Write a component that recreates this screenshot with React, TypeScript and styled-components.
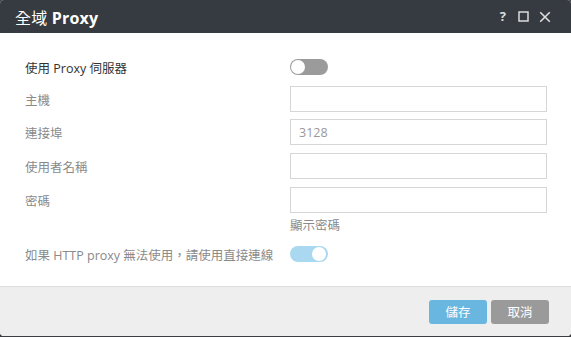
import styled, { createGlobalStyle } from 'styled-components';

const GlobalStyle = createGlobalStyle`
  html, body {
    margin: 0;
    padding: 0;
    background: #3b3d42;
  }
  body {
    font-family: "Open Sans", "Noto Sans CJK TC", sans-serif;
  }
`;

export default function App() {
  return (
    <>
      <GlobalStyle />
      <Dialog>
        <Header>
          <Title>
            <TitleCjk>全域</TitleCjk> Proxy
          </Title>
          <HeaderIcons>
            <HelpIcon>?</HelpIcon>
            <svg width="11" height="11" viewBox="0 0 11 11">
              <rect x="1" y="1" width="9" height="9" fill="none" stroke="#dcdcdc" strokeWidth="1.5" />
            </svg>
            <svg width="12" height="12" viewBox="0 0 12 12">
              <path d="M1.2 1.2 L10.8 10.8 M10.8 1.2 L1.2 10.8" stroke="#dcdcdc" strokeWidth="1.6" />
            </svg>
          </HeaderIcons>
        </Header>
        <Body>
          <Row>
            <Label $strong>使用 Proxy 伺服器</Label>
            <Toggle $on={false} />
          </Row>
          <Row $gap={6}>
            <Label>主機</Label>
            <Input />
          </Row>
          <Row $gap={7}>
            <Label>連接埠</Label>
            <Input placeholder="3128" />
          </Row>
          <Row $gap={8}>
            <Label>使用者名稱</Label>
            <Input />
          </Row>
          <Row $gap={8}>
            <Label>密碼</Label>
            <Input type="password" />
          </Row>
          <HintRow>顯示密碼</HintRow>
          <Row $gap={5}>
            <Label>如果 HTTP proxy 無法使用，請使用直接連線</Label>
            <Toggle $on />
          </Row>
        </Body>
        <Footer>
          <Button $variant="primary">儲存</Button>
          <Button $variant="secondary">取消</Button>
        </Footer>
      </Dialog>
    </>
  );
}

const Dialog = styled.div`
  width: 571px;
  height: 336px;
  background: #fff;
  border-radius: 4px;
  overflow: hidden;
  display: flex;
  flex-direction: column;
`;

const Header = styled.div`
  height: 33px;
  background: #363a41;
  display: flex;
  align-items: center;
  justify-content: space-between;
  padding: 0 20px 0 15px;
  flex-shrink: 0;
`;

const Title = styled.div`
  color: #fff;
  font-size: 16px;
  font-weight: 700;
  letter-spacing: 0.2px;
`;

const TitleCjk = styled.span`
  font-weight: 400;
`;

const HeaderIcons = styled.div`
  display: flex;
  align-items: center;
  gap: 10px;
`;

const HelpIcon = styled.span`
  color: #dcdcdc;
  font-size: 13px;
  font-weight: 700;
  line-height: 1;
  margin-right: 2px;
`;

const Body = styled.div`
  flex: 1;
  padding: 21px 24px 0 25px;
  display: flex;
  flex-direction: column;
`;

const Row = styled.div<{ $gap?: number }>`
  display: grid;
  grid-template-columns: 265px 257px;
  align-items: center;
  height: 26px;
  margin-top: ${(p) => p.$gap ?? 0}px;
`;

const Label = styled.div<{ $strong?: boolean }>`
  font-size: 12.5px;
  color: ${(p) => (p.$strong ? '#333' : '#8a8a8a')};
`;

const Input = styled.input`
  box-sizing: border-box;
  width: 257px;
  height: 26px;
  border: 1px solid #d6d6d6;
  border-radius: 0;
  padding: 0 8px;
  font-family: inherit;
  font-size: 12.5px;
  color: #555;
  outline: none;
  &::placeholder {
    color: #999;
  }
`;

const HintRow = styled.div`
  padding-left: 265px;
  font-size: 12.5px;
  color: #8a8a8a;
  line-height: 20px;
  margin-top: 3px;
`;

const Toggle = styled.div<{ $on: boolean }>`
  position: relative;
  width: 38px;
  height: 16px;
  border-radius: 8px;
  background: ${(p) => (p.$on ? '#aad8f1' : '#9b9b9b')};
  &::after {
    content: '';
    position: absolute;
    top: 1px;
    ${(p) => (p.$on ? 'right: 2px;' : 'left: 1px;')}
    width: 14px;
    height: 14px;
    border-radius: 50%;
    background: #fff;
  }
`;

const Footer = styled.div`
  height: 49px;
  background: #eeeeee;
  border-top: 1px solid #dddddd;
  display: flex;
  justify-content: flex-end;
  align-items: center;
  gap: 4px;
  padding: 0 22px 0 0;
  flex-shrink: 0;
`;

const Button = styled.button<{ $variant: 'primary' | 'secondary' }>`
  width: 58px;
  height: 24px;
  border: none;
  border-radius: 3px;
  color: #fff;
  font-family: inherit;
  font-size: 12.5px;
  background: ${(p) => (p.$variant === 'primary' ? '#69b7e1' : '#9a9a9a')};
  padding: 0;
`;
